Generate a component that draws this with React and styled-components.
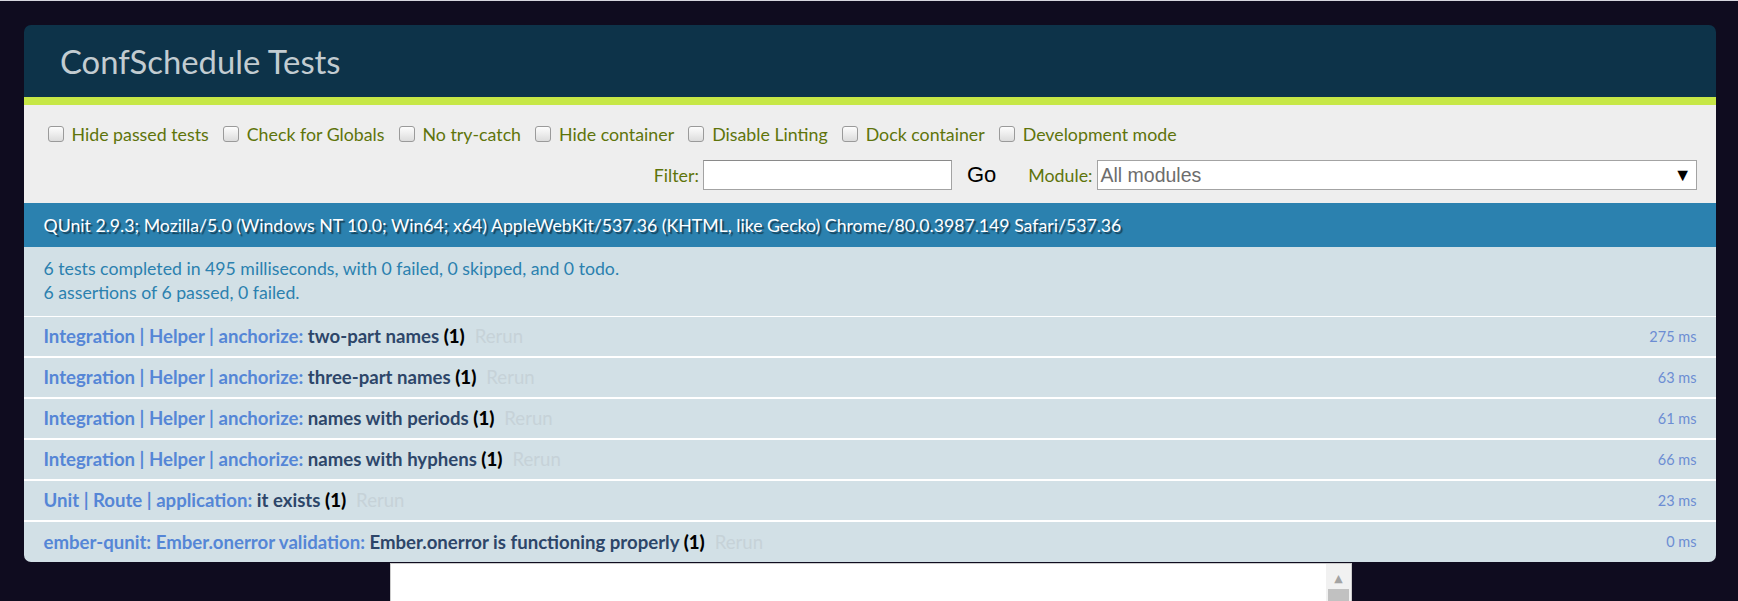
import React from 'react'
import styled, { createGlobalStyle } from 'styled-components'

const GlobalStyle = createGlobalStyle`
  html, body {
    margin: 0;
    padding: 0;
    overflow: hidden;
    background: #0f0c1f;
  }
  body {
    font-family: Lato, "Liberation Sans", sans-serif;
  }
`

const configs = [
  'Hide passed tests',
  'Check for Globals',
  'No try-catch',
  'Hide container',
  'Disable Linting',
  'Dock container',
  'Development mode'
]

const tests = [
  { module: 'Integration | Helper | anchorize:', name: 'two-part names', runtime: '275 ms' },
  { module: 'Integration | Helper | anchorize:', name: 'three-part names', runtime: '63 ms' },
  { module: 'Integration | Helper | anchorize:', name: 'names with periods', runtime: '61 ms' },
  { module: 'Integration | Helper | anchorize:', name: 'names with hyphens', runtime: '66 ms' },
  { module: 'Unit | Route | application:', name: 'it exists', runtime: '23 ms' },
  {
    module: 'ember-qunit: Ember.onerror validation:',
    name: 'Ember.onerror is functioning properly',
    runtime: '0 ms'
  }
]

const App = () => {
  return (
    <Page>
      <GlobalStyle />
      <QUnit>
        <Header>ConfSchedule Tests</Header>
        <Banner />
        <Toolbar>
          <ConfigRow>
            {configs.map((label) => (
              <ConfigLabel key={label}>
                <Checkbox type="checkbox" />
                {label}
              </ConfigLabel>
            ))}
          </ConfigRow>
          <FilterRow>
            <FilterLabel>
              Filter: <FilterInput type="text" />
            </FilterLabel>
            <GoButton>Go</GoButton>
            <FilterLabel>
              Module:
              <ModuleSelect>
                <span>All modules</span>
                <Arrow>▼</Arrow>
              </ModuleSelect>
            </FilterLabel>
          </FilterRow>
        </Toolbar>
        <UserAgent>
          QUnit 2.9.3; Mozilla/5.0 (Windows NT 10.0; Win64; x64) AppleWebKit/537.36
          (KHTML, like Gecko) Chrome/80.0.3987.149 Safari/537.36
        </UserAgent>
        <TestResult>
          <div>6 tests completed in 495 milliseconds, with 0 failed, 0 skipped, and 0 todo.</div>
          <div>6 assertions of 6 passed, 0 failed.</div>
        </TestResult>
        <TestList>
          {tests.map((t) => (
            <TestItem key={t.name}>
              <TestTitle>
                <ModuleName>{t.module}</ModuleName> <TestName>{t.name}</TestName>{' '}
                <Counts>(1)</Counts>
                <Rerun>Rerun</Rerun>
              </TestTitle>
              <Runtime>{t.runtime}</Runtime>
            </TestItem>
          ))}
        </TestList>
      </QUnit>
      <TestingContainer>
        <Scrollbar>
          <ScrollArrow>▲</ScrollArrow>
          <ScrollThumb />
        </Scrollbar>
      </TestingContainer>
    </Page>
  )
}

const Page = styled.div`
  border-top: 1px solid #d6d6de;
  padding: 24px 22px 0 24px;
`

const QUnit = styled.div`
  display: flex;
  flex-direction: column;
`

const Header = styled.h1`
  margin: 0;
  height: 72px;
  box-sizing: border-box;
  padding: 0 0 0 36px;
  display: flex;
  align-items: center;
  background: #0d3349;
  color: #c2ccd1;
  font-size: 32.8px;
  font-weight: 400;
  border-radius: 7px 7px 0 0;
`

const Banner = styled.div`
  height: 8px;
  background: #c6e746;
`

const Toolbar = styled.div`
  background: #eeeeee;
  color: #5e740b;
  padding: 10px 19.5px;
  font-size: 17.8px;
`

const ConfigRow = styled.div`
  height: 38px;
  display: flex;
  align-items: center;
  gap: 14px;
  padding-left: 4px;
`

const ConfigLabel = styled.label`
  display: flex;
  align-items: center;
  gap: 8px;
`

const Checkbox = styled.input`
  appearance: none;
  margin: 0;
  width: 16px;
  height: 16px;
  border: 1px solid #9a9a9a;
  border-radius: 3px;
  background: linear-gradient(#fdfdfd, #dcdcdc);
  box-sizing: border-box;
`

const FilterRow = styled.div`
  height: 36px;
  padding-top: 4px;
  display: flex;
  align-items: center;
  justify-content: flex-end;
`

const FilterLabel = styled.label`
  display: flex;
  align-items: center;
  gap: 4px;
`

const FilterInput = styled.input`
  width: 249px;
  height: 30px;
  box-sizing: border-box;
  margin: 0;
  border: 1px solid #a3a3a3;
  border-top-color: #8a8a8a;
  background: #fff;
`

const GoButton = styled.span`
  font-family: "Liberation Sans", Arial, sans-serif;
  font-size: 22px;
  color: #000;
  margin: 0 32px 0 15px;
`

const ModuleSelect = styled.div`
  width: 600px;
  height: 30px;
  box-sizing: border-box;
  border: 1px solid #a3a3a3;
  background: #fff;
  display: flex;
  align-items: center;
  justify-content: space-between;
  padding: 0 4px 0 3px;
  font-family: "Liberation Sans", Arial, sans-serif;
  font-size: 19.5px;
  color: #6d6d6d;
`

const Arrow = styled.span`
  color: #000;
  font-size: 18px;
`

const UserAgent = styled.div`
  background: #2b81af;
  color: #fff;
  text-shadow: rgba(0, 0, 0, 0.5) 2px 2px 1px;
  height: 44px;
  display: flex;
  align-items: center;
  padding: 0 19.5px;
  font-size: 17.7px;
`

const TestResult = styled.div`
  background: #d2e0e6;
  color: #2b81af;
  padding: 9.75px 19.5px;
  font-size: 17.7px;
  line-height: 24.5px;
  border-bottom: 1.5px solid #fff;
`

const TestList = styled.ol`
  margin: 0;
  padding: 0;
  list-style: none;
`

const TestItem = styled.li`
  height: 41px;
  box-sizing: border-box;
  background: #d2e0e6;
  border-bottom: 2px solid #fff;
  padding: 0 19.5px;
  display: flex;
  align-items: center;
  justify-content: space-between;

  &:last-child {
    border-bottom: none;
    height: 40px;
    border-radius: 0 0 7px 7px;
  }
`

const TestTitle = styled.strong`
  font-size: 18.6px;
  font-weight: 700;
  white-space: pre;
`

const ModuleName = styled.span`
  color: #5586d6;
`

const TestName = styled.span`
  color: #2d4669;
`

const Counts = styled.b`
  color: #000;
`

const Rerun = styled.a`
  color: #c6d2d8;
  font-weight: 400;
  padding-left: 10px;
`

const Runtime = styled.span`
  color: #6c8dd3;
  font-size: 14.5px;
`

const TestingContainer = styled.div`
  width: 962px;
  height: 576px;
  box-sizing: border-box;
  margin: 1px auto 0;
  position: relative;
  left: 1px;
  background: #fff;
  border: 1.5px solid #cccccc;
  display: flex;
  justify-content: flex-end;
`

const Scrollbar = styled.div`
  width: 25px;
  background: #f1f1f1;
  display: flex;
  flex-direction: column;
  align-items: center;
`

const ScrollArrow = styled.span`
  font-size: 11px;
  color: #a3a3a3;
  margin-top: 8px;
  height: 17px;
  font-family: "DejaVu Sans", sans-serif;
`

const ScrollThumb = styled.div`
  width: 21px;
  height: 300px;
  background: #c1c1c1;
`

export default App
